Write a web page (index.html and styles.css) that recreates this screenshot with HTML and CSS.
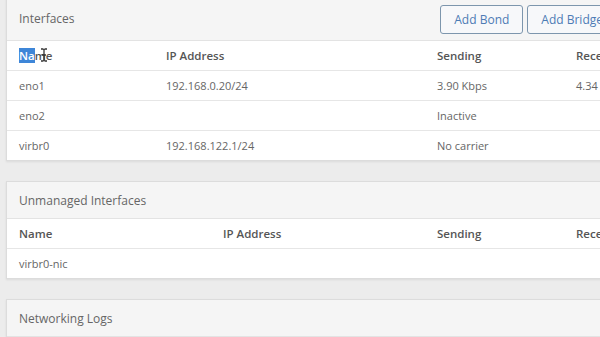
FILE: index.html
```html
<!DOCTYPE html>
<html lang="en">
<head>
    <meta charset="UTF-8">
    <title>Networking</title>
    <link rel="stylesheet" href="styles.css">
</head>
<body>
    <div class="page">
        <div class="card">
            <div class="card-head first">
                <span class="card-title">Interfaces</span>
                <div class="actions">
                    <button class="btn">Add Bond</button>
                    <button class="btn">Add Bridge</button>
                </div>
            </div>
            <table class="iface managed">
                <thead>
                    <tr>
                        <th><span class="name-cell"><span class="sel">Na</span>me<svg class="ibeam" width="8" height="14" viewBox="0 0 8 14"><path d="M1 1h2.5M4.5 1H7M4 1v12M1 13h2.5M4.5 13H7M2 7h4" stroke="#333" stroke-width="1.3" fill="none"/></svg></span></th>
                        <th>IP Address</th>
                        <th>Sending</th>
                        <th>Receiving</th>
                    </tr>
                </thead>
                <tbody>
                    <tr><td>eno1</td><td>192.168.0.20/24</td><td>3.90 Kbps</td><td>4.34 Kbps</td></tr>
                    <tr><td>eno2</td><td></td><td>Inactive</td><td></td></tr>
                    <tr><td>virbr0</td><td>192.168.122.1/24</td><td>No carrier</td><td></td></tr>
                </tbody>
            </table>
        </div>

        <div class="card">
            <div class="card-head">
                <span class="card-title">Unmanaged Interfaces</span>
            </div>
            <table class="iface unmanaged">
                <thead>
                    <tr><th>Name</th><th>IP Address</th><th>Sending</th><th>Receiving</th></tr>
                </thead>
                <tbody>
                    <tr><td>virbr0-nic</td><td></td><td></td><td></td></tr>
                </tbody>
            </table>
        </div>

        <div class="card">
            <div class="card-head">
                <span class="card-title">Networking Logs</span>
            </div>
            <div class="logs"></div>
        </div>
    </div>
</body>
</html>
```

FILE: styles.css
```css
html, body { margin: 0; padding: 0; overflow: hidden; }
body { background: #ececec; font-family: "Open Sans", "Liberation Sans", sans-serif; color: #555; width: 600px; height: 337px; }
.page { width: 624px; margin-top: -5px; padding-left: 6px; display: flex; flex-direction: column; gap: 20px; }
.card { background: #fff; border: 1px solid #dcdcdc; box-shadow: 0 1px 2px rgba(0,0,0,0.08); }
.card-head { background: #f5f5f5; height: 36px; padding: 0 12px; display: flex; align-items: center; border-bottom: 1px solid #e3e3e3; }
.card-head.first { height: 44px; }
.card-title { font-size: 12px; color: #666; flex: 1; white-space: nowrap; }
.actions { display: flex; gap: 4px; margin-top: 2px; }
.btn { font-family: inherit; font-size: 12px; color: #4d7bb5; background: #f7f8fa; border: 1px solid #7d96ad; border-radius: 3px; height: 29px; padding: 0 13px; white-space: nowrap; }
.iface { border-collapse: collapse; table-layout: fixed; width: 100%; font-size: 11px; }
.iface th, .iface td { text-align: left; padding: 0 0 0 12px; height: 29px; border-bottom: 1px solid #e6e6e6; white-space: nowrap; }
.iface th { font-weight: 600; color: #555; font-size: 11.5px; }
.iface td { color: #666; }
.iface tbody tr:last-child td { border-bottom: none; }
.managed th:nth-child(1) { width: 135px; }
.managed th:nth-child(2) { width: 259px; }
.managed th:nth-child(3) { width: 127px; }
.unmanaged th:nth-child(1) { width: 192px; }
.unmanaged th:nth-child(2) { width: 202px; }
.unmanaged th:nth-child(3) { width: 127px; }
.name-cell { position: relative; }
.sel { background: #3e86d8; color: #fff; }
.ibeam { position: absolute; left: 21px; top: 0; }
.logs { height: 30px; }
```
